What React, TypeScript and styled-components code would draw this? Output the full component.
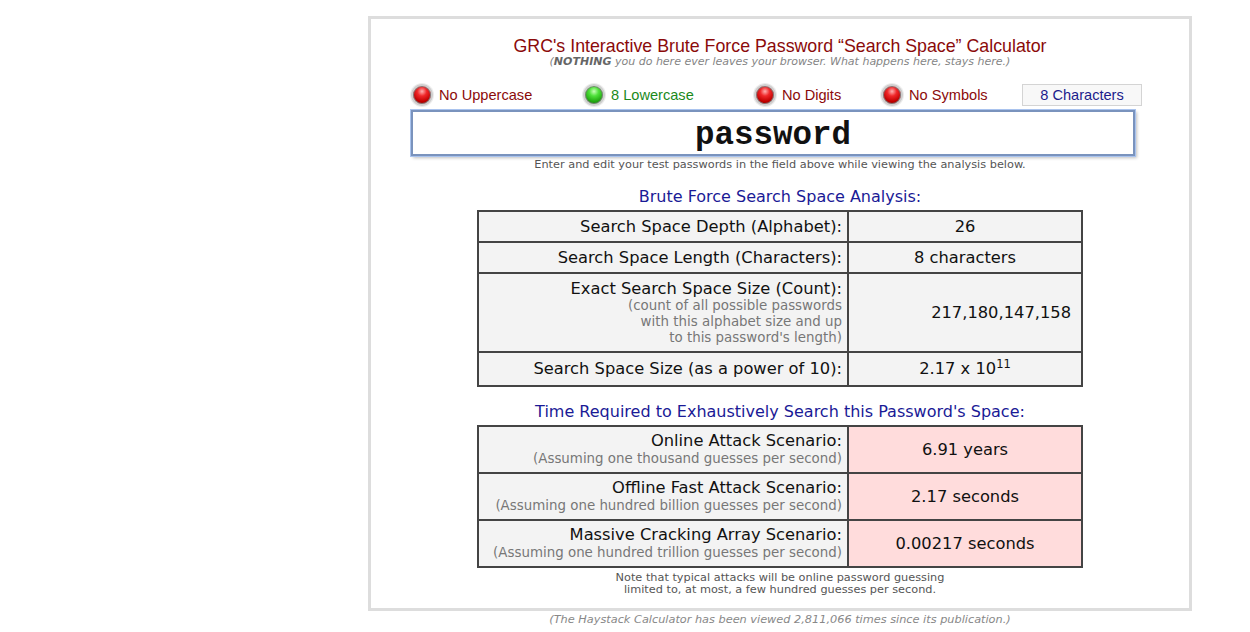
import styled, { createGlobalStyle } from "styled-components";

const GlobalStyle = createGlobalStyle`
  html, body {
    margin: 0;
    padding: 0;
    background: #ffffff;
  }
  body {
    font-family: "DejaVu Sans", Verdana, sans-serif;
  }
`;

const Page = styled.div`
  padding: 16px 0 0 368px;
  width: 824px;
`;

const Panel = styled.div`
  box-sizing: border-box;
  width: 824px;
  height: 595px;
  border: 3px solid #dddddd;
  display: flex;
  flex-direction: column;
  align-items: center;
`;

const Title = styled.div`
  margin-top: 17px;
  font-family: "Liberation Sans", Arial, sans-serif;
  font-size: 17.8px;
  line-height: 20px;
  color: #8b0a0a;
`;

const Subtitle = styled.div`
  font-size: 11px;
  line-height: 12px;
  font-style: italic;
  color: #858585;
  b {
    color: #666;
  }
`;

const IndicatorRow = styled.div`
  margin-top: 16px;
  display: grid;
  grid-template-columns: 172px 171px 127px 141px 120px;
  width: 731px;
  height: 22px;
  align-self: flex-start;
  margin-left: 40px;
  align-items: center;
`;

const Indicator = styled.div<{ $ok: boolean }>`
  display: flex;
  align-items: center;
  gap: 6px;
  font-family: "Liberation Sans", Arial, sans-serif;
  font-size: 14.6px;
  color: ${(p) => (p.$ok ? "#1b8a1b" : "#8b0a0a")};
`;

const Ball = styled.span<{ $ok: boolean }>`
  box-sizing: border-box;
  width: 22px;
  height: 22px;
  border-radius: 50%;
  border: 2px solid #cfcfcf;
  box-shadow: 0 0 0 1px #ececec, inset 0 0 0 1px #7a7a7a;
  background: ${(p) =>
    p.$ok
      ? "radial-gradient(circle at 50% 30%, #c8ffb8 0%, #4fe13a 30%, #22a812 65%, #0f6a08 100%)"
      : "radial-gradient(circle at 50% 30%, #ffb0b0 0%, #f0282a 30%, #c00000 65%, #6a0000 100%)"};
`;

const CountBox = styled.div`
  box-sizing: border-box;
  height: 22px;
  border: 1px solid #d4d4d4;
  background: #f8f8f8;
  display: flex;
  align-items: center;
  justify-content: center;
  font-family: "Liberation Sans", Arial, sans-serif;
  font-size: 14.6px;
  color: #1c1c8c;
`;

const PasswordInput = styled.input`
  box-sizing: border-box;
  margin-top: 4px;
  align-self: flex-start;
  margin-left: 40px;
  width: 724px;
  height: 46px;
  border: 2px solid #7a93bd;
  outline: 1px solid #a9c3ee;
  box-shadow: 2px 2px 3px rgba(0, 0, 0, 0.25);
  background: #fff;
  text-align: center;
  font-family: "Liberation Mono", "Courier New", monospace;
  font-weight: bold;
  font-size: 32.5px;
  color: #111;
  padding: 5px 0 0 0;
  caret-color: #000;
`;

const Hint = styled.div<{ $gap?: number }>`
  margin-top: ${(p) => p.$gap ?? 0}px;
  font-size: 11.3px;
  line-height: 12px;
  color: #555;
  text-align: center;
`;

const SectionTitle = styled.div<{ $gap: number }>`
  margin-top: ${(p) => p.$gap}px;
  font-size: 16px;
  line-height: 19px;
  color: #1a1a96;
`;

const Table = styled.table`
  margin-top: 4px;
  width: 606px;
  border-collapse: collapse;
  border: 2px solid #444;
  td {
    border: 2px solid #444;
    background: #f3f3f3;
    color: #111;
    font-size: 16.3px;
    line-height: 18px;
    padding: 0;
  }
`;

const LabelCell = styled.td<{ $h: number }>`
  width: 363px;
  height: ${(p) => p.$h}px;
  text-align: right;
  padding-right: 5px !important;
`;

const ValueCell = styled.td<{ $alert?: boolean; $right?: boolean }>`
  text-align: ${(p) => (p.$right ? "right" : "center")};
  padding-right: ${(p) => (p.$right ? "10px" : "0")} !important;
  background: ${(p) => (p.$alert ? "#ffdcdc" : "#f3f3f3")} !important;
  sup {
    font-size: 11.5px;
    line-height: 0;
  }
`;

const Note = styled.div<{ $lh?: number }>`
  font-size: 13.4px;
  line-height: ${(p) => p.$lh ?? 16}px;
  color: #777;
`;

const Footer = styled.div`
  text-align: center;
  margin-top: 2px;
  font-size: 11.3px;
  font-style: italic;
  color: #888;
`;

const indicators = [
  { label: "No Uppercase", ok: false },
  { label: "8 Lowercase", ok: true },
  { label: "No Digits", ok: false },
  { label: "No Symbols", ok: false },
];

const scenarios = [
  {
    name: "Online Attack Scenario:",
    note: "(Assuming one thousand guesses per second)",
    value: "6.91 years",
  },
  {
    name: "Offline Fast Attack Scenario:",
    note: "(Assuming one hundred billion guesses per second)",
    value: "2.17 seconds",
  },
  {
    name: "Massive Cracking Array Scenario:",
    note: "(Assuming one hundred trillion guesses per second)",
    value: "0.00217 seconds",
  },
];

export default function App() {
  return (
    <>
      <GlobalStyle />
      <Page>
        <Panel>
          <Title>GRC's Interactive Brute Force Password “Search Space” Calculator</Title>
          <Subtitle>
            (<b>NOTHING</b> you do here ever leaves your browser. What happens here, stays here.)
          </Subtitle>
          <IndicatorRow>
            {indicators.map((ind) => (
              <Indicator key={ind.label} $ok={ind.ok}>
                <Ball $ok={ind.ok} />
                {ind.label}
              </Indicator>
            ))}
            <CountBox>8 Characters</CountBox>
          </IndicatorRow>
          <PasswordInput defaultValue="password" spellCheck={false} />
          <Hint $gap={3}>
            Enter and edit your test passwords in the field above while viewing the analysis below.
          </Hint>

          <SectionTitle $gap={16}>Brute Force Search Space Analysis:</SectionTitle>
          <Table>
            <tbody>
              <tr>
                <LabelCell $h={29}>Search Space Depth (Alphabet):</LabelCell>
                <ValueCell>26</ValueCell>
              </tr>
              <tr>
                <LabelCell $h={29}>Search Space Length (Characters):</LabelCell>
                <ValueCell>8 characters</ValueCell>
              </tr>
              <tr>
                <LabelCell $h={77}>
                  Exact Search Space Size (Count):
                  <Note>
                    (count of all possible passwords
                    <br />
                    with this alphabet size and up
                    <br />
                    to this password's length)
                  </Note>
                </LabelCell>
                <ValueCell $right>217,180,147,158</ValueCell>
              </tr>
              <tr>
                <LabelCell $h={32}>Search Space Size (as a power of 10):</LabelCell>
                <ValueCell>
                  2.17 x 10<sup>11</sup>
                </ValueCell>
              </tr>
            </tbody>
          </Table>

          <SectionTitle $gap={15}>Time Required to Exhaustively Search this Password's Space:</SectionTitle>
          <Table>
            <tbody>
              {scenarios.map((s) => (
                <tr key={s.name}>
                  <LabelCell $h={45}>
                    {s.name}
                    <Note $lh={17}>{s.note}</Note>
                  </LabelCell>
                  <ValueCell $alert>{s.value}</ValueCell>
                </tr>
              ))}
            </tbody>
          </Table>
          <Hint $gap={4}>
            Note that typical attacks will be online password guessing
            <br />
            limited to, at most, a few hundred guesses per second.
          </Hint>
        </Panel>
        <Footer>(The Haystack Calculator has been viewed 2,811,066 times since its publication.)</Footer>
      </Page>
    </>
  );
}
